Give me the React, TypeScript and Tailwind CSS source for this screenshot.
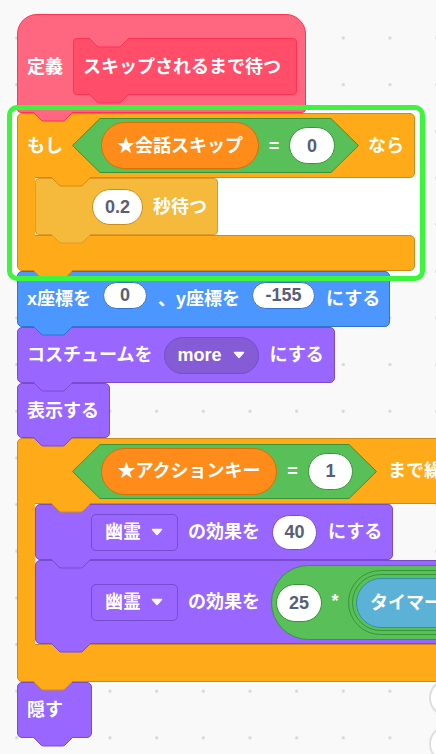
import React from "react";

function Tab({ fill, stroke, className }: { fill: string; stroke: string; className: string }) {
  return (
    <svg
      className={`pointer-events-none absolute z-10 ${className}`}
      width="40"
      height="10"
      viewBox="0 0 40 10"
    >
      <path d="M0 0L8 8Q9 9 10.5 9L29.5 9Q31 9 32 8L40 0Z" fill={fill} />
      <path d="M0 0L8 8Q9 9 10.5 9L29.5 9Q31 9 32 8L40 0" fill="none" stroke={stroke} />
    </svg>
  );
}

function Caret() {
  return (
    <svg width="12" height="8" viewBox="0 0 12 8">
      <path d="M1.5 1.5h9L6 6.5z" fill="white" stroke="white" strokeWidth="1.5" strokeLinejoin="round" />
    </svg>
  );
}

function Num({ children, className }: { children: React.ReactNode; className: string }) {
  return (
    <div
      className={`flex shrink-0 items-center justify-center rounded-full border bg-white text-[#575E75] ${className}`}
    >
      {children}
    </div>
  );
}

function Hex({ w, className, children }: { w: number; className: string; children: React.ReactNode }) {
  const s = 28;
  return (
    <div className={`relative flex h-[55px] shrink-0 items-center pl-[29px] ${className}`}>
      <svg className="absolute left-0 top-0" width={w} height={55}>
        <polygon
          points={`0.5,27.5 ${s},0.5 ${w - s},0.5 ${w - 0.5},27.5 ${w - s},54.5 ${s},54.5`}
          fill="#59C059"
          stroke="#389438"
        />
      </svg>
      <div className="relative flex items-center">{children}</div>
    </div>
  );
}

function EffectDropdown() {
  return (
    <div className="flex h-[37px] w-[87px] shrink-0 items-center gap-[10px] rounded-[5px] border border-[#774DCB] bg-[#9966FF] pl-[13px]">
      <span>幽霊</span>
      <Caret />
    </div>
  );
}

export default function App() {
  return (
    <div className="relative h-[754px] w-[436px] overflow-hidden bg-[#f9f9f9] bg-[radial-gradient(circle,#d6d6d6_1.2px,transparent_1.7px)] bg-[length:46.67px_46.67px] bg-[position:-6.67px_14.67px] font-[family-name:'Liberation_Sans','Noto_Sans_CJK_JP',sans-serif] text-[18px] font-bold leading-none text-white">
      {/* white fill behind the highlighted stack */}
      <div className="absolute left-[12px] top-[110px] h-[166px] w-[408px] bg-white" />

      <div className="relative flex flex-col items-start pl-[17px] pt-[14px]">
        {/* define hat */}
        <div className="relative flex h-[99px] w-[289px] items-center gap-[10px] rounded-t-[20px] rounded-b-[4px] border border-[#FF3355] bg-[#FF6680] pl-[9px] pt-[6px]">
          <span>定義</span>
          <div className="relative flex h-[57px] w-[224px] items-center rounded-[4px] border border-[#FF3355] bg-[#FF4D6A] pl-[9px]">
            <Tab className="-top-px left-[15px]" fill="#FF6680" stroke="#FF3355" />
            <span>スキップされるまで待つ</span>
            <Tab className="left-[15px] top-full" fill="#FF4D6A" stroke="#FF3355" />
          </div>
          <Tab className="left-[15px] top-full" fill="#FF6680" stroke="#FF3355" />
        </div>

        {/* if block */}
        <div className="relative flex w-[398px] flex-col">
          <div className="relative flex h-[65px] items-center rounded-[5px] rounded-bl-none border border-[#CF8B17] bg-[#FFAB19] pl-[9px]">
            <span>もし</span>
            <Hex w={287} className="ml-[9px] w-[287px]">
              <div className="flex h-[47px] w-[158px] items-center justify-center rounded-full border border-[#DB6E00] bg-[#FF8C1A]">
                ★会話スキップ
              </div>
              <span className="w-[30px] text-center">=</span>
              <Num className="h-[37px] w-[46px] border-[#389438]">0</Num>
            </Hex>
            <span className="ml-[9px]">なら</span>
            <Tab className="left-[33px] top-full" fill="#FFAB19" stroke="#CF8B17" />
          </div>
          <div className="flex">
            <div className="relative z-[1] -my-px w-[18px] shrink-0 border-l border-[#CF8B17] bg-[#FFAB19]" />
            <div className="flex flex-col items-start">
              <div className="relative flex h-[57px] w-[183px] items-center rounded-[4px] border border-[#DB9A2B] bg-[#F5B93B] pl-[56px]">
                <Num className="h-[36px] w-[51px] border-[#CF8B17]">0.2</Num>
                <span className="ml-[10px]">秒待つ</span>
                <Tab className="left-[15px] top-full" fill="#F5B93B" stroke="#DB9A2B" />
              </div>
            </div>
          </div>
          <div className="relative h-[36px] rounded-[5px] rounded-tl-none border border-[#CF8B17] bg-[#FFAB19]">
            <Tab className="left-[15px] top-full" fill="#FFAB19" stroke="#CF8B17" />
          </div>
        </div>

        {/* go to x y */}
        <div className="relative flex h-[56px] w-[373px] items-center rounded-[5px] border border-[#3373CC] bg-[#4C97FF] pl-[9px]">
          <span>x座標を</span>
          <Num className="mb-[8px] ml-[12px] h-[27px] w-[44px] border-[#3373CC]">0</Num>
          <span className="ml-[11px]">、y座標を</span>
          <Num className="mb-[8px] ml-[12px] h-[27px] w-[63px] border-[#3373CC]">-155</Num>
          <span className="ml-[11px]">にする</span>
          <Tab className="left-[15px] top-full" fill="#4C97FF" stroke="#3373CC" />
        </div>

        {/* switch costume */}
        <div className="relative flex h-[56px] w-[318px] items-center rounded-[5px] border border-[#774DCB] bg-[#9966FF] pl-[9px]">
          <span>コスチュームを</span>
          <div className="ml-[12px] flex h-[37px] w-[95px] items-center gap-[12px] rounded-full border border-[#774DCB] bg-[#855CD6] pl-[12px]">
            <span>more</span>
            <Caret />
          </div>
          <span className="ml-[10px]">にする</span>
          <Tab className="left-[15px] top-full" fill="#9966FF" stroke="#774DCB" />
        </div>

        {/* show */}
        <div className="relative flex h-[55px] w-[93px] items-center rounded-[5px] border border-[#774DCB] bg-[#9966FF] pl-[9px]">
          <span>表示する</span>
          <Tab className="left-[15px] top-full" fill="#9966FF" stroke="#774DCB" />
        </div>

        {/* repeat until */}
        <div className="relative flex w-[480px] flex-col">
          <div className="relative flex h-[66px] items-center rounded-[5px] rounded-bl-none border border-[#CF8B17] bg-[#FFAB19] pl-[54px]">
            <Hex w={305} className="w-[305px]">
              <div className="flex h-[47px] w-[176px] items-center justify-center rounded-full border border-[#DB6E00] bg-[#FF8C1A]">
                ★アクションキー
              </div>
              <span className="w-[31px] text-center">=</span>
              <Num className="h-[37px] w-[45px] border-[#389438]">1</Num>
            </Hex>
            <span className="ml-[11px] whitespace-nowrap">まで繰り返す</span>
            <Tab className="left-[33px] top-full" fill="#FFAB19" stroke="#CF8B17" />
          </div>
          <div className="flex">
            <div className="relative z-[1] -my-px w-[18px] shrink-0 border-l border-[#CF8B17] bg-[#FFAB19]" />
            <div className="flex flex-col items-start">
              <div className="relative flex h-[56px] w-[358px] items-center rounded-[5px] border border-[#774DCB] bg-[#9966FF] pl-[55px]">
                <EffectDropdown />
                <span className="ml-[10px]">の効果を</span>
                <Num className="ml-[12px] h-[35px] w-[45px] border-[#774DCB]">40</Num>
                <span className="ml-[11px]">にする</span>
                <Tab className="left-[15px] top-full" fill="#9966FF" stroke="#774DCB" />
              </div>
              <div className="relative flex h-[84px] w-max items-center rounded-[5px] border border-[#774DCB] bg-[#9966FF] pl-[55px] pr-[20px]">
                <EffectDropdown />
                <span className="ml-[10px]">の効果を</span>
                <div className="ml-[11px] mt-[1px] flex h-[75px] items-center rounded-full border border-[#389438] bg-[#59C059] pl-[4px] pr-[20px]">
                  <Num className="h-[38px] w-[46px] border-[#389438]">25</Num>
                  <span className="mb-[4px] w-[26px] text-center">*</span>
                  <div className="flex h-[65px] items-center rounded-full border border-[#389438] bg-[#59C059] p-[3px]">
                    <div className="flex h-[57px] items-center rounded-full border border-[#389438] bg-[#59C059] p-[3px]">
                      <div className="flex h-[50px] items-center rounded-full border border-[#2E8EB8] bg-[#5CB1D6] pl-[13px] pr-[20px]">
                        <span className="whitespace-nowrap">タイマー</span>
                      </div>
                    </div>
                  </div>
                </div>
                <Tab className="left-[15px] top-full" fill="#9966FF" stroke="#774DCB" />
              </div>
            </div>
          </div>
          <div className="relative h-[38px] rounded-[5px] rounded-tl-none border border-[#CF8B17] bg-[#FFAB19]">
            <Tab className="left-[15px] top-full" fill="#FFAB19" stroke="#CF8B17" />
          </div>
        </div>

        {/* hide */}
        <div className="relative flex h-[56px] w-[75px] items-center rounded-[5px] border border-[#774DCB] bg-[#9966FF] pl-[9px]">
          <span>隠す</span>
          <Tab className="left-[15px] top-full" fill="#9966FF" stroke="#774DCB" />
        </div>
      </div>

      {/* selection highlight */}
      <div className="pointer-events-none absolute left-[7px] top-[105px] z-20 h-[176px] w-[418px] rounded-[10px] border-[5px] border-[#3df53d]" />

      {/* zoom buttons, partly off screen */}
      <div className="absolute left-[429px] top-[679px] z-30 h-[38px] w-[38px] rounded-full border-2 border-[#dedede] bg-white" />
      <div className="absolute left-[429px] top-[725px] z-30 h-[38px] w-[38px] rounded-full border-2 border-[#dedede] bg-white" />
    </div>
  );
}
